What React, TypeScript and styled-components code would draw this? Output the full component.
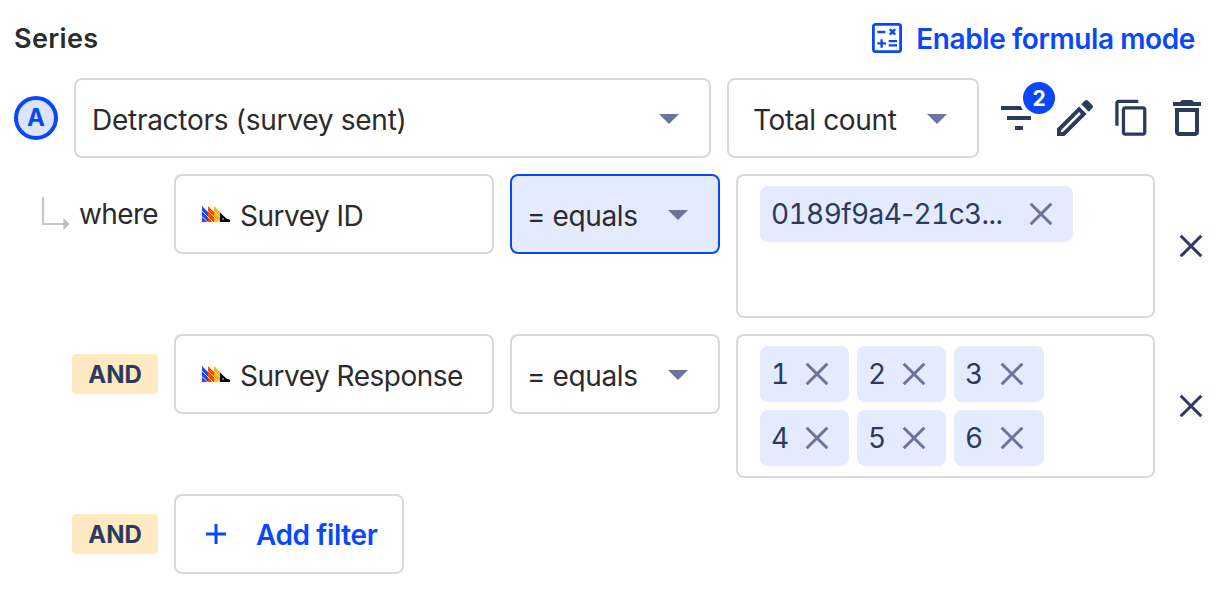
import React from "react";
import styled, { createGlobalStyle } from "styled-components";

const BLUE = "#0848fa";
const NAVY = "#2d3a5f";
const MUTED = "#6b7599";
const LINE = "#d9d9d9";
const INK = "#2b2b2c";

const GlobalStyle = createGlobalStyle`
  * { box-sizing: border-box; }
  body { margin: 0; background: #fff; }
  button { font: inherit; color: inherit; background: none; border: 0; padding: 0; }
  svg { display: block; flex: none; }
`;

const Panel = styled.main`
  display: flex;
  flex-direction: column;
  gap: 16px;
  width: 1228px;
  height: 596px;
  padding-left: 14px;
  overflow: hidden;
  background: #fff;
  color: ${INK};
  font: 400 28px/40px Inter, "Liberation Sans", sans-serif;
`;

const Header = styled.header`
  display: flex;
  justify-content: space-between;
  height: 62px;
  padding: 18px 33px 0 0;
`;

const Title = styled.h2`
  margin: 0;
  font-size: 27px;
  font-weight: 600;
  line-height: 41px;
  letter-spacing: 0.35px;
`;

const FormulaButton = styled.button`
  display: flex;
  align-items: center;
  gap: 14px;
  height: 40px;
  color: ${BLUE};
  font-weight: 600;
  white-space: nowrap;
`;

const SeriesRow = styled.section`
  display: flex;
  align-items: center;
  gap: 16px;
  height: 80px;
`;

const SeriesBadge = styled.span`
  display: grid;
  place-items: center;
  flex: none;
  width: 44px;
  height: 44px;
  border: 4px solid ${BLUE};
  border-radius: 50%;
  background: #dbe3fe;
  color: ${BLUE};
  font-size: 24px;
  font-weight: 700;
  line-height: 36px;
`;

const Field = styled.button<{ $width: number; $pad: string; $active?: boolean }>`
  display: flex;
  align-items: center;
  flex: none;
  width: ${(p) => p.$width}px;
  height: 80px;
  padding: ${(p) => p.$pad};
  border: 2px solid ${(p) => (p.$active ? BLUE : LINE)};
  border-radius: 8px;
  background: ${(p) => (p.$active ? "#e5ebfe" : "#fff")};
  white-space: nowrap;
`;

const Label = styled.span<{ $spacing?: number }>`
  letter-spacing: ${(p) => p.$spacing ?? 0}px;
`;

const FieldLabel = styled(Label)`
  flex: 1;
  padding-top: 3px;
  text-align: left;
`;

const FormulaLabel = styled(Label)`
  padding-top: 2px;
`;

const AddLabel = styled(Label)`
  margin: 2px 0 0 30px;
  color: ${BLUE};
  font-weight: 600;
`;

const Actions = styled.div`
  display: flex;
  align-items: center;
  margin-left: 4px;
`;

const FilterAction = styled.button`
  position: relative;
  width: 36px;
  height: 24px;
  margin-right: 16px;
`;

const CountBadge = styled.span`
  position: absolute;
  top: -24px;
  left: 24px;
  width: 32px;
  height: 32px;
  border-radius: 50%;
  background: ${BLUE};
  box-shadow: 0 0 0 4px #fff;
  color: #fff;
  font-size: 21px;
  font-weight: 700;
  line-height: 33px;
  text-align: center;
`;

const EditAction = styled.button`
  margin-right: 12.7px;
`;

const CopyAction = styled.button`
  margin-right: 12px;
`;

const FilterRow = styled.section<{ $tall?: boolean }>`
  display: flex;
  align-items: flex-start;
  gap: 16px;
  height: ${(p) => (p.$tall ? 144 : 80)}px;
`;

const Lead = styled.div`
  display: flex;
  align-items: center;
  justify-content: flex-end;
  flex: none;
  width: 144px;
  height: 80px;
`;

const Where = styled.div`
  display: flex;
  align-items: center;
  gap: 9px;
  white-space: nowrap;
`;

const Chip = styled.span`
  width: 86px;
  height: 40px;
  border-radius: 4px;
  background: #ffe9c3;
  color: ${NAVY};
  font-size: 24px;
  font-weight: 700;
  line-height: 42px;
  text-align: center;
`;

const Values = styled.div`
  display: flex;
  flex-wrap: wrap;
  align-content: flex-start;
  gap: 8px;
  flex: none;
  width: 419px;
  height: 144px;
  padding: 10px 70px 10px 22px;
  border: 2px solid ${LINE};
  border-radius: 8px;
`;

const Tag = styled.span<{ $width: number }>`
  display: flex;
  align-items: center;
  justify-content: space-between;
  flex: none;
  width: ${(p) => p.$width}px;
  height: 56px;
  padding: 0 20px 0 11px;
  border-radius: 8px;
  background: #e5ebfe;
  color: ${NAVY};
  font-variant-numeric: tabular-nums;
  white-space: nowrap;
`;

const Dash = styled.span`
  font-variant-numeric: normal;
`;

const RemoveRow = styled.button`
  display: flex;
  align-items: center;
  height: 144px;
  margin-left: 8px;
`;

const PropertyIcon = styled.span`
  margin: 0 10px 1px 0;
`;

const CaretIcon = styled.svg`
  margin-top: 2px;
`;

const Cross = ({ color }: { color: string }) => (
  <svg width="24" height="24" viewBox="0 0 24 24" stroke={color} strokeWidth="3">
    <path d="M1.7 1.7 22.3 22.3M22.3 1.7 1.7 22.3" />
  </svg>
);

const Caret = () => (
  <CaretIcon width="20" height="10" viewBox="0 0 20 10">
    <path d="M0 0H20L10 10Z" fill={MUTED} />
  </CaretIcon>
);

const FormulaIcon = () => (
  <svg width="30" height="30" viewBox="0 0 30 30" fill="none" stroke="currentColor">
    <rect x="1.4" y="1.4" width="27.2" height="27.2" rx="2" strokeWidth="2.8" />
    <path strokeWidth="2.3" d="M5.3 9H13.3M5.3 20.4H13.9M9.6 16.2V24.7M16.7 18.2H25M16.7 22.4H25M17.8 6.1 23.2 11.6M23.2 6.1 17.8 11.6" />
  </svg>
);

const BranchIcon = () => (
  <svg width="29" height="34" viewBox="0 0 29 34">
    <path d="M2 0V27H23" fill="none" stroke="#c6c6c6" strokeWidth="2.2" />
    <path d="M22.4 21 28.6 27 22.4 33Z" fill="#bdbdbd" />
  </svg>
);

const HedgehogIcon = () => (
  <svg width="28" height="16" viewBox="0 0 28 16">
    <path d="M0 0 6 6V16H0Z" fill="#1d4aff" />
    <path d="M6 0 12 6V16H6Z" fill="#f54e00" />
    <path d="M12 0 18 6V16H12Z" fill="#fdb02b" />
    <path d="M0 5 11 16M0 10.4 5.6 16M6 5 17 16M12 5 18 11" stroke="#fff" strokeWidth="0.8" />
    <path d="M18 6.4 24.5 12.5 28 14V16H18Z" fill="#000" />
    <circle cx="21" cy="13" r="0.8" fill="#fff" />
  </svg>
);

const property = (name: string, spacing: number) => (
  <Field $width={320} $pad="0 0 0 26px">
    <PropertyIcon><HedgehogIcon /></PropertyIcon>
    <FieldLabel $spacing={spacing}>{name}</FieldLabel>
  </Field>
);

const operator = (active: boolean) => (
  <Field $width={210} $pad="0 30px 0 15px" $active={active}>
    <FieldLabel $spacing={-0.4}>= equals</FieldLabel>
    <Caret />
  </Field>
);

export default function App() {
  return (
    <>
      <GlobalStyle />
      <Panel>
        <Header>
          <Title>Series</Title>
          <FormulaButton>
            <FormulaIcon />
            <FormulaLabel $spacing={-0.4}>Enable formula mode</FormulaLabel>
          </FormulaButton>
        </Header>

        <SeriesRow>
          <SeriesBadge>A</SeriesBadge>
          <Field $width={637} $pad="0 30px 0 16px">
            <FieldLabel $spacing={-0.27}>Detractors (survey sent)</FieldLabel>
            <Caret />
          </Field>
          <Field $width={252} $pad="0 30px 0 24px">
            <FieldLabel $spacing={-0.36}>Total count</FieldLabel>
            <Caret />
          </Field>
          <Actions>
            <FilterAction aria-label="Filters">
              <svg width="40" height="24" viewBox="0 0 40 24">
                <path fill={NAVY} d="M2 0H38V4H2ZM8 10H32V14H8ZM16 20H24V24H16Z" />
              </svg>
              <CountBadge>2</CountBadge>
            </FilterAction>
            <EditAction aria-label="Rename">
              <svg width="48" height="48" viewBox="0 0 24 24">
                <path fill={NAVY} d="M14.06 9.02l.92.92L5.92 19H5v-.92l9.06-9.06M17.66 3c-.25 0-.51.1-.7.29l-1.83 1.83 3.75 3.75 1.83-1.83c.39-.39.39-1.02 0-1.41l-2.34-2.34c-.2-.2-.45-.29-.71-.29zm-3.6 3.19L3 17.25V21h3.75L17.81 9.94l-3.75-3.75z" />
              </svg>
            </EditAction>
            <CopyAction aria-label="Duplicate">
              <svg width="39.3" height="39.3" viewBox="0 0 24 24">
                <path fill={NAVY} d="M16 1H4c-1.1 0-2 .9-2 2v14h2V3h12V1zm3 4H8c-1.1 0-2 .9-2 2v14c0 1.1.9 2 2 2h11c1.1 0 2-.9 2-2V7c0-1.1-.9-2-2-2zm0 16H8V7h11v14z" />
              </svg>
            </CopyAction>
            <button aria-label="Delete">
              <svg width="48" height="48" viewBox="0 0 24 24">
                <path fill={NAVY} d="M6 19c0 1.1.9 2 2 2h8c1.1 0 2-.9 2-2V7H6v12zM8 9h8v10H8V9zm7.5-5l-1-1h-5l-1 1H5v2h14V4h-3.5z" />
              </svg>
            </button>
          </Actions>
        </SeriesRow>

        <FilterRow $tall>
          <Lead>
            <Where>
              <BranchIcon />
              <Label $spacing={-0.65}>where</Label>
            </Where>
          </Lead>
          {property("Survey ID", -0.5)}
          {operator(true)}
          <Values>
            <Tag $width={313}>
              <Label $spacing={-0.6}>0189f9a4<Dash>-</Dash>21c3...</Label>
              <Cross color={MUTED} />
            </Tag>
          </Values>
          <RemoveRow aria-label="Remove filter"><Cross color={NAVY} /></RemoveRow>
        </FilterRow>

        <FilterRow $tall>
          <Lead><Chip>AND</Chip></Lead>
          {property("Survey Response", -0.5)}
          {operator(false)}
          <Values>
            {["1", "2", "3", "4", "5", "6"].map((v, i) => (
              <Tag key={v} $width={i % 3 === 2 ? 90 : 89}>
                <Label>{v}</Label>
                <Cross color={MUTED} />
              </Tag>
            ))}
          </Values>
          <RemoveRow aria-label="Remove filter"><Cross color={NAVY} /></RemoveRow>
        </FilterRow>

        <FilterRow>
          <Lead><Chip>AND</Chip></Lead>
          <Field $width={230} $pad="0 0 0 30px">
            <svg width="20" height="20" viewBox="0 0 20 20" stroke={BLUE} strokeWidth="3">
              <path d="M10 0V20M0 10H20" />
            </svg>
            <AddLabel $spacing={-0.4}>Add filter</AddLabel>
          </Field>
        </FilterRow>
      </Panel>
    </>
  );
}
